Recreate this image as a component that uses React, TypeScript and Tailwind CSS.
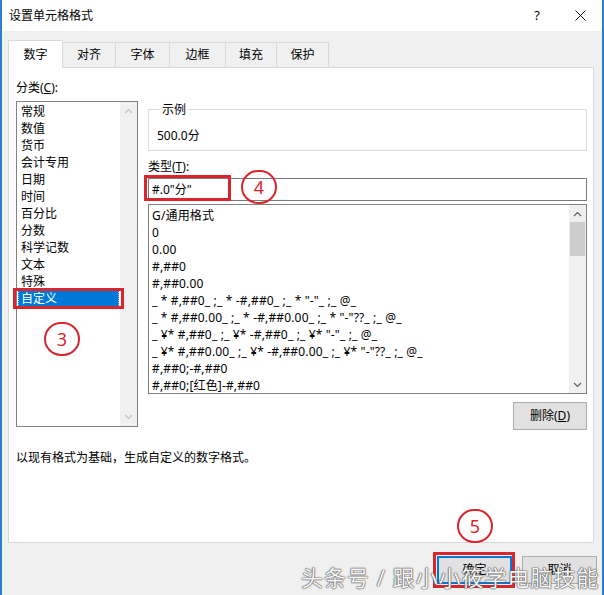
const categories = ['常规', '数值', '货币', '会计专用', '日期', '时间', '百分比', '分数', '科学记数', '文本', '特殊', '自定义'];

const formats = [
  'G/通用格式',
  '0',
  '0.00',
  '#,##0',
  '#,##0.00',
  '_ * #,##0_ ;_ * -#,##0_ ;_ * "-"_ ;_ @_',
  '_ * #,##0.00_ ;_ * -#,##0.00_ ;_ * "-"??_ ;_ @_',
  '_ ¥* #,##0_ ;_ ¥* -#,##0_ ;_ ¥* "-"_ ;_ @_',
  '_ ¥* #,##0.00_ ;_ ¥* -#,##0.00_ ;_ ¥* "-"??_ ;_ @_',
  '#,##0;-#,##0',
  '#,##0;[红色]-#,##0',
];

const tabs = [
  { name: '对齐', w: 'w-[53px]' },
  { name: '字体', w: 'w-[54px]' },
  { name: '边框', w: 'w-[56px]' },
  { name: '填充', w: 'w-[51px]' },
  { name: '保护', w: 'w-[52px]' },
];

const Chevron = ({ up, color }: { up?: boolean; color: string }) => (
  <svg width="9" height="6" viewBox="0 0 9 6" fill="none">
    <path d={up ? 'M1 5 L4.5 1.5 L8 5' : 'M1 1 L4.5 4.5 L8 1'} stroke={color} strokeWidth="1.2" />
  </svg>
);

const Badge = ({ n, pos }: { n: string; pos: string }) => (
  <div className={`absolute ${pos} w-[36px] h-[34px] rounded-full border-2 border-[#d7262e] flex items-center justify-center text-[18px] leading-none text-[#d7262e]`}>
    {n}
  </div>
);

export default function App() {
  return (
    <div className="relative w-[604px] h-[595px] bg-[#f0f0f0] border-x-2 border-[#2e7dd1] overflow-hidden font-['Noto_Sans','Noto_Sans_CJK_SC',sans-serif] text-[12px] text-black">
      {/* title bar */}
      <div className="h-[31px] bg-white flex items-center">
        <div className="flex-1 pl-[7px]">设置单元格格式</div>
        <div className="w-[42px] text-center text-[13px]">?</div>
        <div className="w-[44px] flex justify-center">
          <svg width="11" height="11" viewBox="0 0 11 11">
            <path d="M0.5 0.5 L10.5 10.5 M10.5 0.5 L0.5 10.5" stroke="#111" strokeWidth="1" />
          </svg>
        </div>
      </div>

      {/* tabs */}
      <div className="relative z-10 mt-[9px] -mb-px pl-[6px] flex items-end h-[28px]">
        <div className="w-[55px] h-[28px] bg-white border border-b-0 border-[#d9d9d9] flex items-center justify-center">数字</div>
        {tabs.map((t) => (
          <div key={t.name} className={`${t.w} h-[25px] mb-px border-t border-r border-[#d9d9d9] bg-[#f0f0f0] flex items-center justify-center`}>
            {t.name}
          </div>
        ))}
      </div>

      {/* panel */}
      <div className="ml-[6px] w-[586px] h-[476px] border border-[#d9d9d9] bg-white flex flex-col">
        <div className="flex pl-[7px]">
          <div className="w-[122px] pt-[11px]">
            <div className="leading-[17px]">分类(<span className="underline">C</span>):</div>
            <div className="mt-[5px] h-[326px] border border-[#828282] flex">
              <div className="flex-1 pt-[1px]">
                {categories.map((c) =>
                  c === '自定义' ? (
                    <div key={c} className="mx-px h-[17px] leading-[15px] bg-[#0078d7] text-white pl-[2px] border border-dotted border-[#9cc8f0]">
                      {c}
                    </div>
                  ) : (
                    <div key={c} className="h-[17px] leading-[17px] pl-[4px]">{c}</div>
                  )
                )}
              </div>
              <div className="w-[17px] bg-[#f0f0f0] flex flex-col items-center justify-between py-[6px]">
                <Chevron up color="#c4c4c4" />
                <Chevron color="#c4c4c4" />
              </div>
            </div>
          </div>

          <div className="ml-[10px] w-[439px] pt-[33px] flex flex-col">
            <fieldset className="border border-[#dcdcdc] pt-[9px] pb-[6px] pl-[8px]">
              <legend className="ml-[4px] px-px leading-[17px]">示例</legend>
              <div className="leading-[17px]">500.0分</div>
            </fieldset>
            <div className="mt-[7px] leading-[17px]">类型(<span className="underline">T</span>):</div>
            <div className="mt-[3px] h-[23px] border border-[#7a7a7a] pl-[3px] flex items-center">#.0"分"</div>
            <div className="mt-[3px] h-[190px] border border-[#828282] flex">
              <div className="flex-1 pt-[2px] pl-[3px] whitespace-pre tracking-[0.15px]">
                {formats.map((f) => (
                  <div key={f} className="h-[17px] leading-[17px]">{f}</div>
                ))}
              </div>
              <div className="w-[17px] bg-[#f0f0f0] flex flex-col items-center">
                <div className="h-[17px] flex items-center"><Chevron up color="#606060" /></div>
                <div className="w-[15px] h-[34px] bg-[#cdcdcd]" />
                <div className="flex-1" />
                <div className="h-[17px] flex items-center"><Chevron color="#606060" /></div>
              </div>
            </div>
            <div className="self-end mt-[8px] w-[74px] h-[28px] bg-[#e1e1e1] border border-[#adadad] flex items-center justify-center">
              删除(<span className="underline">D</span>)
            </div>
          </div>
        </div>
        <div className="mt-[19px] pl-[7px] leading-[17px]">以现有格式为基础，生成自定义的数字格式。</div>
      </div>

      {/* footer buttons */}
      <div className="mt-[13px] flex justify-end gap-[10px] pr-[5px]">
        <div className="w-[75px] h-[28px] border-2 border-[#0078d7] bg-[#e1e1e1] flex items-center justify-center">确定</div>
        <div className="w-[75px] h-[28px] border border-[#adadad] bg-[#e1e1e1] flex items-center justify-center">取消</div>
      </div>

      {/* annotations */}
      <div className="absolute left-[11px] top-[288px] w-[111px] h-[21px] border-[3px] border-[#d7262e]" />
      <div className="absolute left-[142px] top-[175px] w-[87px] h-[26px] border-[3px] border-[#d7262e]" />
      <div className="absolute left-[431px] top-[552px] w-[82px] h-[36px] border-[3px] border-[#d7262e]" />
      <Badge n="3" pos="left-[42px] top-[322px]" />
      <Badge n="4" pos="left-[239px] top-[170px]" />
      <Badge n="5" pos="left-[455px] top-[509px]" />

      {/* watermark */}
      <div className="absolute left-[299px] top-[565px] text-[22px] leading-[24px] tracking-[1px] whitespace-pre text-[#f6f6f6] [text-shadow:0_0_1px_#444,0_0_1px_#444,0_0_2px_#777]">
        头条号 / 跟小小筱学电脑技能
      </div>
    </div>
  );
}
